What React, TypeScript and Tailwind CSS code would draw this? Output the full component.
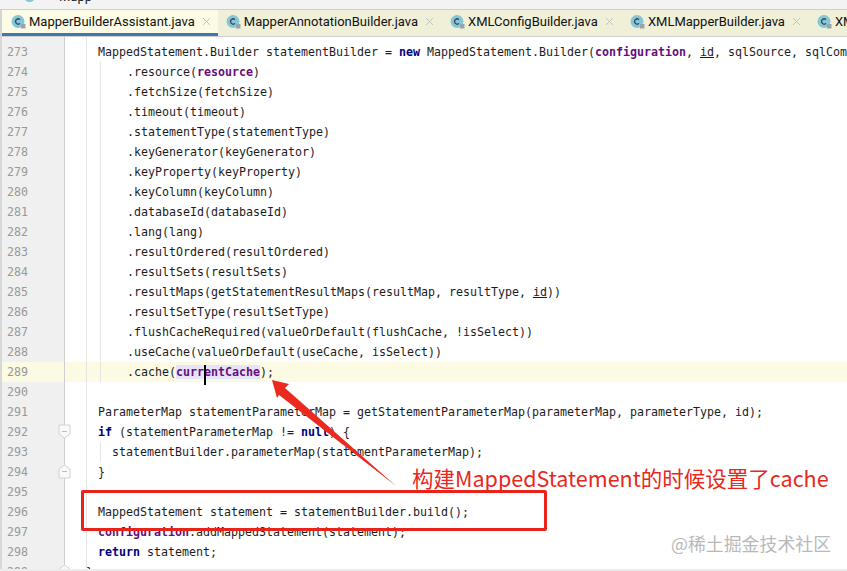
import type { ReactNode } from "react";

const cjk = "font-['Noto_Sans_CJK_SC','Noto_Sans',sans-serif]";

function Kw({ children }: { children: ReactNode }) {
  return <span className="font-bold text-[#000080]">{children}</span>;
}

function Field({ children }: { children: ReactNode }) {
  return <span className="font-bold text-[#660e7a]">{children}</span>;
}

type Line = { no: number; code: ReactNode; guide?: "chain" | "block" };

const chain = (name: string, arg: ReactNode, tail = ")"): ReactNode => (
  <>
    .{name}({arg}
    {tail}
  </>
);

const lines: Line[] = [
  {
    no: 273,
    code: (
      <>
        MappedStatement.Builder statementBuilder = <Kw>new</Kw> MappedStatement.Builder(<Field>configuration</Field>,{" "}
        <span className="underline">id</span>, sqlSource, sqlCommandType)
      </>
    ),
  },
  { no: 274, guide: "chain", code: chain("resource", <Field>resource</Field>) },
  { no: 275, guide: "chain", code: chain("fetchSize", "fetchSize") },
  { no: 276, guide: "chain", code: chain("timeout", "timeout") },
  { no: 277, guide: "chain", code: chain("statementType", "statementType") },
  { no: 278, guide: "chain", code: chain("keyGenerator", "keyGenerator") },
  { no: 279, guide: "chain", code: chain("keyProperty", "keyProperty") },
  { no: 280, guide: "chain", code: chain("keyColumn", "keyColumn") },
  { no: 281, guide: "chain", code: chain("databaseId", "databaseId") },
  { no: 282, guide: "chain", code: chain("lang", "lang") },
  { no: 283, guide: "chain", code: chain("resultOrdered", "resultOrdered") },
  { no: 284, guide: "chain", code: chain("resultSets", "resultSets") },
  {
    no: 285,
    guide: "chain",
    code: (
      <>
        .resultMaps(getStatementResultMaps(resultMap, resultType, <span className="underline">id</span>))
      </>
    ),
  },
  { no: 286, guide: "chain", code: chain("resultSetType", "resultSetType") },
  { no: 287, guide: "chain", code: ".flushCacheRequired(valueOrDefault(flushCache, !isSelect))" },
  { no: 288, guide: "chain", code: ".useCache(valueOrDefault(useCache, isSelect))" },
  {
    no: 289,
    guide: "chain",
    code: (
      <>
        .cache(
        <span className="relative bg-[#e6e4fb]">
          <Field>currentCache</Field>
          <span className="absolute left-[28px] top-0 h-5 w-[2px] bg-black" />
        </span>
        );
      </>
    ),
  },
  { no: 290, code: "" },
  { no: 291, code: "ParameterMap statementParameterMap = getStatementParameterMap(parameterMap, parameterType, id);" },
  {
    no: 292,
    code: (
      <>
        <Kw>if</Kw> (statementParameterMap != <Kw>null</Kw>) {"{"}
      </>
    ),
  },
  { no: 293, guide: "block", code: "statementBuilder.parameterMap(statementParameterMap);" },
  { no: 294, code: "}" },
  { no: 295, code: "" },
  { no: 296, code: "MappedStatement statement = statementBuilder.build();" },
  {
    no: 297,
    code: (
      <>
        <Field>configuration</Field>.addMappedStatement(statement);
      </>
    ),
  },
  {
    no: 298,
    code: (
      <>
        <Kw>return</Kw> statement;
      </>
    ),
  },
  { no: 299, code: <span className="-ml-[12px]">{"}"}</span> },
];

function ClassIcon() {
  return (
    <svg width="15" height="15" viewBox="0 0 15 15" className="shrink-0">
      <circle cx="7" cy="7.5" r="6.5" fill="#86c6d6" />
      <path d="M9 5.6a2.6 2.6 0 1 0 0 3.8" fill="none" stroke="#2b4a55" strokeWidth="1.2" />
      <rect x="10" y="10" width="4.5" height="4.5" fill="#9aa3ad" />
    </svg>
  );
}

function CloseIcon() {
  return (
    <svg width="9" height="9" viewBox="0 0 9 9" className="shrink-0">
      <path d="M1 1l7 7M8 1l-7 7" stroke="#c4c4b8" strokeWidth="1" />
    </svg>
  );
}

function Tab({ name, active }: { name: string; active?: boolean }) {
  return (
    <div
      className={
        active
          ? "flex h-[26px] shrink-0 items-center gap-[3px] border-b-[3px] border-[#3e78b2] bg-[#fcfce6] pl-[9px] pr-[7px]"
          : "flex h-[26px] shrink-0 items-center gap-[3px] pb-[3px] pl-[8px] pr-[8px]"
      }
    >
      <ClassIcon />
      <span className="whitespace-nowrap text-[13px] leading-none text-[#111]">{name}</span>
      <span className="ml-[4px]">
        <CloseIcon />
      </span>
    </div>
  );
}

function FoldMark({ up }: { up?: boolean }) {
  return (
    <svg width="13" height="15" viewBox="0 0 13 15" className="absolute right-[-7px] top-[2px]">
      <path
        d={up ? "M1 14V5l5.5-4L12 5v9z" : "M1 1v9l5.5 4 5.5-4V1z"}
        fill="#f9f9f9"
        stroke="#d2d2d2"
      />
      <path d="M4 7.5h5" stroke="#bdbdbd" />
    </svg>
  );
}

export default function App() {
  return (
    <div className="flex h-[571px] w-[847px] flex-col overflow-hidden bg-white font-['DejaVu_Sans_Mono',monospace]">
      {/* window title, cut off by the crop */}
      <div className="flex h-[10px] shrink-0 items-end gap-[24px] overflow-hidden border-b border-[#cfcfcf] bg-[#f3f3f3] pl-[24px] font-['Roboto',sans-serif]">
        <span className="-mt-[12px] mb-[7px] h-[11px] w-[11px] rounded-full bg-[#86c6d6]" />
        <span className="mb-[6px] text-[13px] leading-none text-[#222]">Mapp</span>
      </div>

      <div className="flex h-[27px] shrink-0 overflow-hidden border-b border-[#cfcfcf] border-l-[2px] border-l-[#d4d4d4] bg-[#f0f0d9] font-['Roboto',sans-serif]">
        <Tab name="MapperBuilderAssistant.java" active />
        <Tab name="MapperAnnotationBuilder.java" />
        <Tab name="XMLConfigBuilder.java" />
        <Tab name="XMLMapperBuilder.java" />
        <Tab name="XMLStatementBuilder.java" />
      </div>

      <div className="relative flex min-h-0 flex-1 overflow-hidden text-[11.63px] leading-5 text-[#1c1c1c]">
        <div className="relative w-[65px] shrink-0 border-l-[2px] border-r border-l-[#d8d8d8] border-r-[#cfcfcf] bg-[#f0f0f0] pt-[5px] text-[#999]">
          {lines.map((l) => (
            <div key={l.no} className={l.no === 289 ? "relative h-5 bg-[#fcfae2] pl-[5px]" : "relative h-5 pl-[5px]"}>
              {l.no}
              {l.no === 292 && <FoldMark />}
              {l.no === 294 && <FoldMark up />}
              {l.no === 299 && <FoldMark up />}
            </div>
          ))}
        </div>

        <div className="min-w-0 flex-1 whitespace-pre">
          <div className="ml-[21px] h-[5px] border-l border-[#e6e6e6]" />
          {lines.map((l) => (
            <div key={l.no} className={l.no === 289 ? "h-5 bg-[#fcfae2] pl-[21px]" : "h-5 pl-[21px]"}>
              <div className="h-5 border-l border-[#e6e6e6] pl-[11px]">
                {l.guide === "chain" ? (
                  <div className="ml-[2px] h-5 border-l border-[#e6e6e6] pl-[26px]">{l.code}</div>
                ) : l.guide === "block" ? (
                  <div className="ml-[2px] h-5 border-l border-[#e6e6e6] pl-[11px]">{l.code}</div>
                ) : (
                  l.code
                )}
              </div>
            </div>
          ))}
        </div>

        {/* annotations pasted over the screenshot */}
        <svg width="847" height="532" viewBox="0 37 847 532" className="pointer-events-none absolute left-0 top-0">
          <polygon points="272,380 289,384 285,388 396,486 279,395 277,398" fill="#ea2a1f" />
        </svg>
        <div className="absolute left-[81px] top-[453px] h-[41px] w-[466px] rounded-[2px] border-[3px] border-[#e8231a]" />
        <div className={`absolute left-[412px] top-[427px] whitespace-nowrap text-[21.5px] leading-[28px] text-[#e8281e] ${cjk}`}>
          构建MappedStatement的时候设置了cache
        </div>
        <div className={`absolute left-[671px] top-[493px] whitespace-nowrap text-[17.9px] leading-[26px] text-[#b9b9b9] ${cjk}`}>
          @稀土掘金技术社区
        </div>
      </div>

      <div className="h-[2px] shrink-0 bg-[#ececec]" />
    </div>
  );
}
